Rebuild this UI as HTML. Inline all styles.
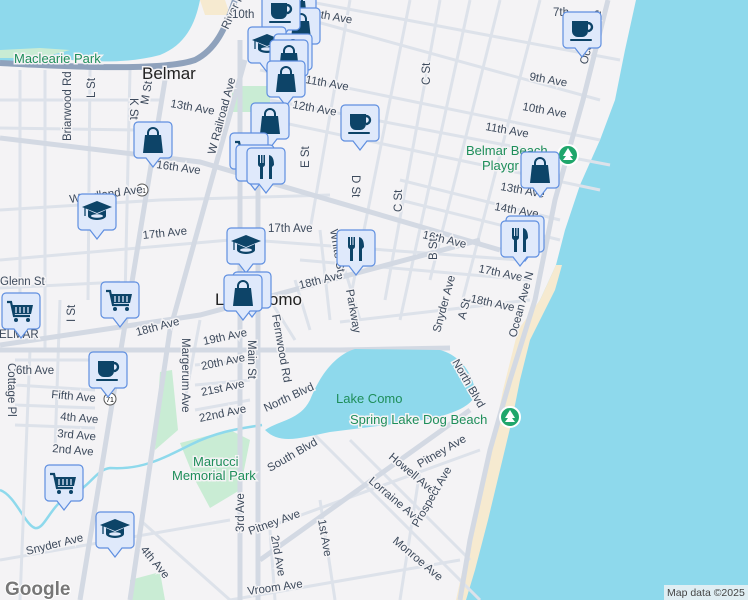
<!DOCTYPE html>
<html><head><meta charset="utf-8"><style>
html,body{margin:0;padding:0;width:748px;height:600px;overflow:hidden;background:#f4f3f5}
svg{display:block}
text{font-family:"Liberation Sans",sans-serif}
.l{font-size:11.5px;fill:#3d4a5c;stroke:#f4f3f5;stroke-width:3px;paint-order:stroke}
.g{font-size:13px;fill:#1e8e5a;stroke:#f4f3f5;stroke-width:3px;paint-order:stroke}
.t{font-size:17px;fill:#222;stroke:#f4f3f5;stroke-width:3px;paint-order:stroke}
</style></head><body>
<svg width="748" height="600" viewBox="0 0 748 600" xmlns="http://www.w3.org/2000/svg">
<defs>
<g id="box"><path d="M4 0H34a4 4 0 0 1 4 4V32a4 4 0 0 1-4 4H26L19 45L12 36H4a4 4 0 0 1-4-4V4a4 4 0 0 1 4-4z" fill="#dfe9fb" stroke="#5f8fe0" stroke-width="1.2"/></g>
<g id="bag"><use href="#box"/><path d="M14 14v-3a5 5 0 0 1 10 0v3" fill="none" stroke="#0d4468" stroke-width="2"/><path d="M11 13H27L29 31H9Z" fill="#0d4468"/></g>
<g id="fork"><use href="#box"/><path d="M11 7v9a3 3 0 0 0 2 3v12h3V19a3 3 0 0 0 2-3V7h-1.5v8h-1V7h-1.5v8h-1V7z" fill="#0d4468"/><path d="M22 31V7c4 1 5 5 5 10l-2 2v12z" fill="#0d4468"/></g>
<g id="cup"><use href="#box"/><path d="M9 9H25V19a6 6 0 0 1-6 6H15a6 6 0 0 1-6-6Z" fill="#0d4468"/><path d="M25 11a4 4 0 0 1 0 8" fill="none" stroke="#0d4468" stroke-width="2.4"/><rect x="7" y="27" width="22" height="2" rx="1" fill="#0d4468"/></g>
<g id="cart"><use href="#box"/><path d="M5 9h4l3 14h16" fill="none" stroke="#0d4468" stroke-width="2.2"/><path d="M10 12H31L29 21H12Z" fill="#0d4468"/><path d="M14 14v6M18 14v6M22 14v6M26 14v6" stroke="#dfe9fb" stroke-width="1.3"/><circle cx="14" cy="27" r="2" fill="#0d4468"/><circle cx="26" cy="27" r="2" fill="#0d4468"/></g>
<g id="grad"><use href="#box"/><path d="M19 7L34 13L19 19L4 13Z" fill="#0d4468"/><path d="M10 16v6c0 2 4 4 9 4s9-2 9-4v-6l-9 4z" fill="#0d4468"/><ellipse cx="19" cy="22" rx="6" ry="1.8" fill="#dfe9fb"/><path d="M7 14v8" stroke="#0d4468" stroke-width="1.3"/></g>
</defs>
<rect width="748" height="600" fill="#f4f3f5"/>
<!-- ocean -->
<path d="M636 0L748 0V600H458L470 545L485 490L495 440L505 390L520 330L540 300L556 265L565 230L580 185L600 140L615 100L625 50Z" fill="#8ed9ec"/>
<path d="M540 300L556 265L562 265L555 290L545 310L530 340L520 380L512 420L500 470L488 520L475 570L466 600L456 600L468 545L483 490L493 440L503 390L518 330Z" fill="#f6ead0"/>
<!-- bay top-left -->
<path d="M0 0H200C195 25 185 45 160 55C130 63 100 62 70 60L40 62L0 62Z" fill="#8ed9ec"/>
<path d="M0 50 L40 48 L70 50 L40 58 L0 58Z" fill="#c9ecd4"/>
<path d="M200 0H225L230 15L205 15Z" fill="#f6ead0"/>
<!-- parks -->
<path d="M232 86H270V112H232Z" fill="#c9ecd4"/>
<path d="M160 372L172 370L178 430L155 450Z" fill="#c9ecd4"/>
<path d="M180 443L230 430L250 440L240 490L210 508L195 480Z" fill="#c9ecd4"/>
<path d="M130 580L160 572L165 600H130Z" fill="#c9ecd4"/>
<!-- creek -->
<path d="M0 490C15 495 25 525 35 528C45 530 50 505 70 495C90 488 95 470 110 468C140 470 160 460 190 445C220 430 245 428 262 425" fill="none" stroke="#8ed9ec" stroke-width="2.5"/>
<!-- roads minor -->
<g stroke="#dde2ea" stroke-width="3" fill="none">
<path d="M0 100H160"/><path d="M0 128L140 130"/><path d="M0 210L160 200L330 195"/><path d="M0 260L230 240"/><path d="M0 288L120 282"/>
<path d="M15 360H95"/><path d="M15 385L95 390"/><path d="M15 405L95 408"/><path d="M15 425L95 428"/>
<path d="M195 365L250 360"/><path d="M195 385L250 380"/><path d="M195 410L250 400"/>
<path d="M20 70V300"/><path d="M45 70V350"/><path d="M90 70L88 300"/><path d="M130 70L125 300"/><path d="M60 300L55 450"/><path d="M30 350L20 600"/>
<path d="M270 120L600 190"/><path d="M260 70L600 140"/><path d="M310 20L600 100"/><path d="M300 0L620 60"/><path d="M270 100L610 165"/><path d="M400 180L560 220"/><path d="M400 200L560 240"/>
<path d="M300 260L530 280"/><path d="M340 322L530 300"/><path d="M250 240L520 260"/>
<path d="M440 0L385 300"/><path d="M410 0L350 300"/><path d="M350 0L310 230"/><path d="M500 0L430 280"/><path d="M470 0L400 320"/><path d="M540 0L460 310"/>
<path d="M320 230L330 320"/><path d="M345 270L360 320"/><path d="M295 280L310 330"/><path d="M270 300L295 340"/>
<path d="M200 320L185 400"/>
<path d="M300 420L480 600"/><path d="M350 440L470 560"/><path d="M260 530L480 450"/><path d="M230 600L460 560"/><path d="M270 530L275 600"/><path d="M320 500L335 600"/><path d="M420 470L400 600"/>
<path d="M0 560L230 520"/><path d="M140 520L230 600"/>
</g>
<!-- roads major -->
<g stroke="#d3d9e3" stroke-width="5" fill="none">
<path d="M0 138L200 162L500 250"/><path d="M0 345L200 315L480 240"/>
<path d="M258 140V600"/><path d="M240 40L240 600"/>
<path d="M165 80L80 600"/><path d="M245 60L170 330L130 600"/>
<path d="M608 0L583 100L555 200L535 300L510 380L490 450L470 540L460 600"/>
<path d="M260 560L470 410"/>
<path d="M0 350H340L450 348"/>
</g>
<!-- lake -->
<path d="M265 430C280 420 300 420 310 400C320 375 335 355 355 349L440 350C460 355 475 375 475 395C470 410 440 418 410 422L330 432C300 438 280 445 265 430Z" fill="#8ed9ec"/>
<path d="M0 63C60 66 160 72 195 60C215 50 225 30 235 0" fill="none" stroke="#8fa2bc" stroke-width="6"/>
<!-- shields -->
<circle cx="142" cy="190" r="6" fill="#fff" stroke="#555"/><text x="142" y="193" font-size="7" text-anchor="middle">71</text>
<circle cx="110" cy="399" r="6" fill="#fff" stroke="#555"/><text x="110" y="402" font-size="7" text-anchor="middle">71</text>
<!-- labels -->
<text class="g" x="14" y="63">Maclearie Park</text>
<text class="t" x="142" y="79">Belmar</text>
<text class="t" x="215" y="305">Lake Como</text>
<text class="l" x="-1" y="338" font-size="10">ELMAR</text>
<text class="l" x="228" y="30" transform="rotate(-65 228 30)">River Rd</text>
<text class="l" x="232" y="18">10th</text>
<text class="l" x="314" y="17" transform="rotate(10 314 17)">9th Ave</text>
<text class="l" x="305" y="83" transform="rotate(10 305 83)">11th Ave</text>
<text class="l" x="292" y="108" transform="rotate(10 292 108)">12th Ave</text>
<text class="l" x="170" y="107" transform="rotate(10 170 107)">13th Ave</text>
<text class="l" x="156" y="168" transform="rotate(8 156 168)" font-size="13">16th Ave</text>
<text class="l" x="422" y="238" transform="rotate(13 422 238)" font-size="13">16th Ave</text>
<text class="l" x="215" y="155" transform="rotate(-75 215 155)">W Railroad Ave</text>
<text class="l" x="70" y="203" transform="rotate(-8 70 203)">Woodland Ave</text>
<text class="l" x="143" y="239" transform="rotate(-6 143 239)">17th Ave</text>
<text class="l" x="268" y="232">17th Ave</text>
<text class="l" x="300" y="289" transform="rotate(-14 300 289)">18th Ave</text>
<text class="l" x="137" y="336" transform="rotate(-15 137 336)" font-size="13">18th Ave</text>
<text class="l" x="0" y="285">Glenn St</text>
<text class="l" x="71" y="141" transform="rotate(-90 71 141)">Briarwood Rd</text>
<text class="l" x="95" y="98" transform="rotate(-90 95 98)">L St</text>
<text class="l" x="130" y="98" transform="rotate(90 130 98)">K St</text>
<text class="l" x="148" y="105" transform="rotate(-80 148 105)">M St</text>
<text class="l" x="309" y="168" transform="rotate(-90 309 168)">E St</text>
<text class="l" x="352" y="175" transform="rotate(90 352 175)">D St</text>
<text class="l" x="430" y="85" transform="rotate(-90 430 85)">C St</text>
<text class="l" x="402" y="212" transform="rotate(-90 402 212)">C St</text>
<text class="l" x="437" y="260" transform="rotate(-90 437 260)">B St</text>
<text class="l" x="330" y="230" transform="rotate(80 330 230)">White St</text>
<text class="l" x="346" y="290" transform="rotate(80 346 290)">Parkway</text>
<text class="l" x="272" y="315" transform="rotate(80 272 315)">Fernwood Rd</text>
<text class="l" x="248" y="340" transform="rotate(90 248 340)" font-size="12.5">Main St</text>
<text class="l" x="182" y="338" transform="rotate(90 182 338)">Margerum Ave</text>
<text class="l" x="75" y="322" transform="rotate(-90 75 322)">I St</text>
<text class="l" x="8" y="363" transform="rotate(90 8 363)">Cottage Pl</text>
<text class="l" x="204" y="345" transform="rotate(-12 204 345)">19th Ave</text>
<text class="l" x="202" y="370" transform="rotate(-12 202 370)">20th Ave</text>
<text class="l" x="202" y="396" transform="rotate(-12 202 396)">21st Ave</text>
<text class="l" x="200" y="422" transform="rotate(-12 200 422)">22nd Ave</text>
<text class="l" x="266" y="412" transform="rotate(-25 266 412)">North Blvd</text>
<text class="l" x="16" y="374">6th Ave</text>
<text class="l" x="51" y="398" transform="rotate(5 51 398)">Fifth Ave</text>
<text class="l" x="60" y="420" transform="rotate(5 60 420)">4th Ave</text>
<text class="l" x="57" y="437" transform="rotate(5 57 437)">3rd Ave</text>
<text class="l" x="52" y="452" transform="rotate(5 52 452)">2nd Ave</text>
<text class="g" x="193" y="466">Marucci</text>
<text class="g" x="172" y="480">Memorial Park</text>
<text class="l" x="270" y="472" transform="rotate(-30 270 472)">South Blvd</text>
<text class="l" x="244" y="532" transform="rotate(-90 244 532)" font-size="12.5">3rd Ave</text>
<text class="l" x="250" y="535" transform="rotate(-20 250 535)">Pitney Ave</text>
<text class="l" x="271" y="536" transform="rotate(80 271 536)">2nd Ave</text>
<text class="l" x="318" y="520" transform="rotate(80 318 520)">1st Ave</text>
<text class="l" x="27" y="555" transform="rotate(-14 27 555)">Snyder Ave</text>
<text class="l" x="140" y="550" transform="rotate(50 140 550)">4th Ave</text>
<text class="l" x="248" y="595" transform="rotate(-8 248 595)">Vroom Ave</text>
<text class="g" x="336" y="403" style="stroke:none">Lake Como</text>
<text class="g" x="350" y="424" font-size="14">Spring Lake Dog Beach</text>
<text class="g" x="466" y="155" font-size="14">Belmar Beach</text>
<text class="g" x="482" y="170" font-size="14">Playgr</text>
<text class="l" x="529" y="80" transform="rotate(10 529 80)">9th Ave</text>
<text class="l" x="522" y="110" transform="rotate(10 522 110)">10th Ave</text>
<text class="l" x="485" y="130" transform="rotate(10 485 130)">11th Ave</text>
<text class="l" x="500" y="190" transform="rotate(10 500 190)">13th Ave</text>
<text class="l" x="494" y="210" transform="rotate(10 494 210)">14th Ave</text>
<text class="l" x="478" y="272" transform="rotate(12 478 272)">17th Ave</text>
<text class="l" x="470" y="302" transform="rotate(12 470 302)">18th Ave</text>
<text class="l" x="440" y="333" transform="rotate(-75 440 333)">Snyder Ave</text>
<text class="l" x="465" y="320" transform="rotate(-75 465 320)">A St</text>
<text class="l" x="516" y="338" transform="rotate(-75 516 338)" font-size="12.5">Ocean Ave N</text>
<text class="l" x="587" y="65" transform="rotate(-75 587 65)" font-size="12.5">Ocean Ave</text>
<text class="l" x="553" y="16">7th</text>
<text class="l" x="452" y="362" transform="rotate(60 452 362)">North Blvd</text>
<text class="l" x="388" y="458" transform="rotate(40 388 458)">Howell Ave</text>
<text class="l" x="420" y="468" transform="rotate(-30 420 468)">Pitney Ave</text>
<text class="l" x="368" y="482" transform="rotate(40 368 482)">Lorraine Ave</text>
<text class="l" x="418" y="528" transform="rotate(-60 418 528)">Prospect Ave</text>
<text class="l" x="392" y="542" transform="rotate(40 392 542)">Monroe Ave</text>
<!-- park pins -->
<circle cx="568" cy="155" r="10" fill="#1fa66b" stroke="#fff" stroke-width="2"/><path d="M568 148l-5 8h3l-3 4h10l-3-4h3z" fill="#fff"/>
<circle cx="510" cy="417" r="10" fill="#1fa66b" stroke="#fff" stroke-width="2"/><path d="M510 410l-5 8h3l-3 4h10l-3-4h3z" fill="#fff"/>
<!-- markers -->
<use href="#bag" x="278" y="-12"/>
<use href="#bag" x="282" y="8"/>
<use href="#cup" x="262" y="-6"/>
<use href="#grad" x="248" y="27"/>
<use href="#bag" x="274" y="34"/>
<use href="#bag" x="270" y="40"/>
<use href="#bag" x="267" y="61"/>
<use href="#cup" x="341" y="105"/>
<use href="#bag" x="251" y="103"/>
<use href="#bag" x="134" y="122"/>
<use href="#cart" x="230" y="133"/>
<use href="#fork" x="236" y="145"/>
<use href="#fork" x="247" y="148"/>
<use href="#grad" x="78" y="194"/>
<use href="#cup" x="563" y="12"/>
<use href="#bag" x="521" y="152"/>
<use href="#fork" x="506" y="216"/>
<use href="#fork" x="501" y="221"/>
<use href="#fork" x="337" y="230"/>
<use href="#grad" x="227" y="228"/>
<use href="#bag" x="233" y="272"/>
<use href="#bag" x="224" y="275"/>
<use href="#cart" x="2" y="293"/>
<use href="#cart" x="101" y="282"/>
<use href="#cup" x="89" y="352"/>
<use href="#cart" x="45" y="465"/>
<use href="#grad" x="96" y="512"/>
<!-- google -->
<text x="5" y="595" font-size="19" font-weight="bold" fill="#777" stroke="#fff" stroke-width="2" paint-order="stroke">Google</text>
<rect x="664" y="585" width="84" height="15" fill="#f4f3f5" opacity="0.8"/>
<text x="667" y="596" font-size="10.5" fill="#444">Map data ©2025</text>
</svg>
</body></html>
